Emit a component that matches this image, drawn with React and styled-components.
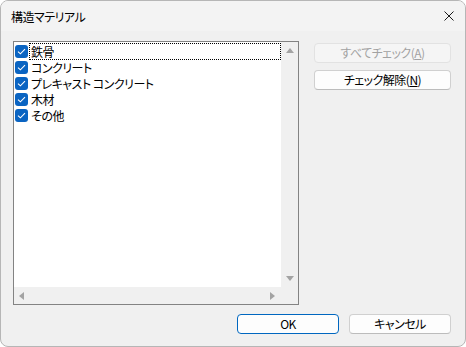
import React from "react";
import styled, { createGlobalStyle } from "styled-components";

const Global = createGlobalStyle`
  * { box-sizing: border-box; }
  html, body { margin: 0; padding: 0; background: #ffffff; }
  body {
    font-family: "Noto Sans CJK JP", "Noto Sans", sans-serif;
    font-size: 12px;
    color: #000;
    font-feature-settings: "palt" 1;
    letter-spacing: -0.5px;
  }
`;

const Window = styled.div`
  width: 466px;
  height: 347px;
  border: 1px solid #b6b6b6;
  border-radius: 8px;
  background: #f0f0f0;
  display: flex;
  flex-direction: column;
  overflow: hidden;
`;

const TitleBar = styled.div`
  height: 30px;
  background: #f3f3f3;
  display: flex;
  align-items: center;
  justify-content: space-between;
  padding: 0 10px 0 10px;
  flex-shrink: 0;
`;

const Title = styled.span`
  font-size: 12px;
  line-height: 14px;
  margin-top: 1px;
`;

const CloseButton = styled.div`
  width: 12px;
  height: 12px;
  display: flex;
  align-items: center;
  justify-content: center;
`;

const Body = styled.div`
  flex: 1;
  display: flex;
  flex-direction: column;
  padding: 10px 14px 11px 12px;
`;

const TopRow = styled.div`
  display: flex;
  gap: 15px;
`;

const ListBox = styled.div`
  width: 286px;
  height: 264px;
  border: 1px solid #838383;
  background: #fff;
  display: grid;
  grid-template-columns: 1fr 17px;
  grid-template-rows: 1fr 17px;
`;

const ListContent = styled.div`
  padding: 1px 0 0 1px;
  display: flex;
  flex-direction: column;
`;

const Row = styled.div`
  height: 16px;
  display: flex;
  align-items: center;
`;

const Check = styled.span`
  width: 13px;
  height: 13px;
  border-radius: 3px;
  background: #0a64c2;
  display: flex;
  align-items: center;
  justify-content: center;
  flex-shrink: 0;
`;

const Label = styled.span`
  flex: ${(p) => (p.$focused ? 1 : "none")};
  height: ${(p) => (p.$focused ? "17px" : "16px")};
  margin-left: 1px;
  padding-left: 1px;
  line-height: 15px;
  white-space: nowrap;
  border: 1px ${(p) => (p.$focused ? "dotted #000" : "solid transparent")};
  border-right-width: ${(p) => (p.$focused ? "1px" : "0")};
  margin-top: ${(p) => (p.$focused ? "1px" : "0")};
`;

const VScroll = styled.div`
  background: #f0f0f0;
  display: flex;
  flex-direction: column;
  justify-content: space-between;
  align-items: center;
  padding: 6px 0 6px 0;
`;

const HScroll = styled.div`
  background: #f0f0f0;
  display: flex;
  justify-content: space-between;
  align-items: center;
  padding: 0 6px 0 5px;
`;

const Corner = styled.div`
  background: #f0f0f0;
`;

const ButtonColumn = styled.div`
  display: flex;
  flex-direction: column;
  gap: 7px;
  padding-top: 2px;
`;

const Button = styled.button`
  width: ${(p) => p.$w || 137}px;
  height: 20px;
  font-family: "Noto Sans CJK JP", "Noto Sans", sans-serif;
  font-feature-settings: "palt" 1;
  letter-spacing: -0.5px;
  font-size: 12px;
  line-height: 14px;
  padding: 0;
  border-radius: 4px;
  background: ${(p) => (p.disabled ? "#f5f5f5" : "#fdfdfd")};
  color: ${(p) => (p.disabled ? "#a2a2a2" : "#000")};
  border: 1px solid ${(p) => (p.$default ? "#0067c0" : p.disabled ? "#e2e2e2" : "#d0d0d0")};
  border-bottom-color: ${(p) => (p.$default ? "#0067c0" : p.disabled ? "#e2e2e2" : "#bcbcbc")};
  display: flex;
  align-items: center;
  justify-content: center;
`;

const Footer = styled.div`
  margin-top: 9px;
  display: flex;
  justify-content: flex-end;
  gap: 10px;
`;

const U = styled.span`
  text-decoration: underline;
  text-underline-offset: 1px;
`;

const Tri = ({ dir }) => {
  const pts = {
    up: "0,5 4,0 8,5",
    down: "0,0 8,0 4,5",
    left: "5,0 5,8 0,4",
    right: "0,0 0,8 5,4",
  }[dir];
  const vertical = dir === "up" || dir === "down";
  return (
    <svg width={vertical ? 8 : 5} height={vertical ? 5 : 8} viewBox={vertical ? "0 0 8 5" : "0 0 5 8"}>
      <polygon points={pts} fill="#a3a3a3" />
    </svg>
  );
};

const CheckIcon = () => (
  <svg width="9" height="7" viewBox="0 0 9 7">
    <path d="M1 3.6 L3.4 5.8 L8 1.2" stroke="#fff" strokeWidth="1.1" fill="none" />
  </svg>
);

const items = ["鉄骨", "コンクリート", "プレキャスト コンクリート", "木材", "その他"];

export default function App() {
  return (
    <>
      <Global />
      <Window>
        <TitleBar>
          <Title>構造マテリアル</Title>
          <CloseButton>
            <svg width="10" height="10" viewBox="0 0 10 10">
              <path d="M0.5 0.5 L9.5 9.5 M9.5 0.5 L0.5 9.5" stroke="#1a1a1a" strokeWidth="1" />
            </svg>
          </CloseButton>
        </TitleBar>
        <Body>
          <TopRow>
            <ListBox>
              <ListContent>
                {items.map((t, i) => (
                  <Row key={t}>
                    <Check><CheckIcon /></Check>
                    <Label $focused={i === 0}>{t}</Label>
                  </Row>
                ))}
              </ListContent>
              <VScroll>
                <Tri dir="up" />
                <Tri dir="down" />
              </VScroll>
              <HScroll>
                <Tri dir="left" />
                <Tri dir="right" />
              </HScroll>
              <Corner />
            </ListBox>
            <ButtonColumn>
              <Button disabled>すべてチェック(<U>A</U>)</Button>
              <Button>チェック解除(<U>N</U>)</Button>
            </ButtonColumn>
          </TopRow>
          <Footer>
            <Button $w={102} $default>OK</Button>
            <Button $w={102}>キャンセル</Button>
          </Footer>
        </Body>
      </Window>
    </>
  );
}
